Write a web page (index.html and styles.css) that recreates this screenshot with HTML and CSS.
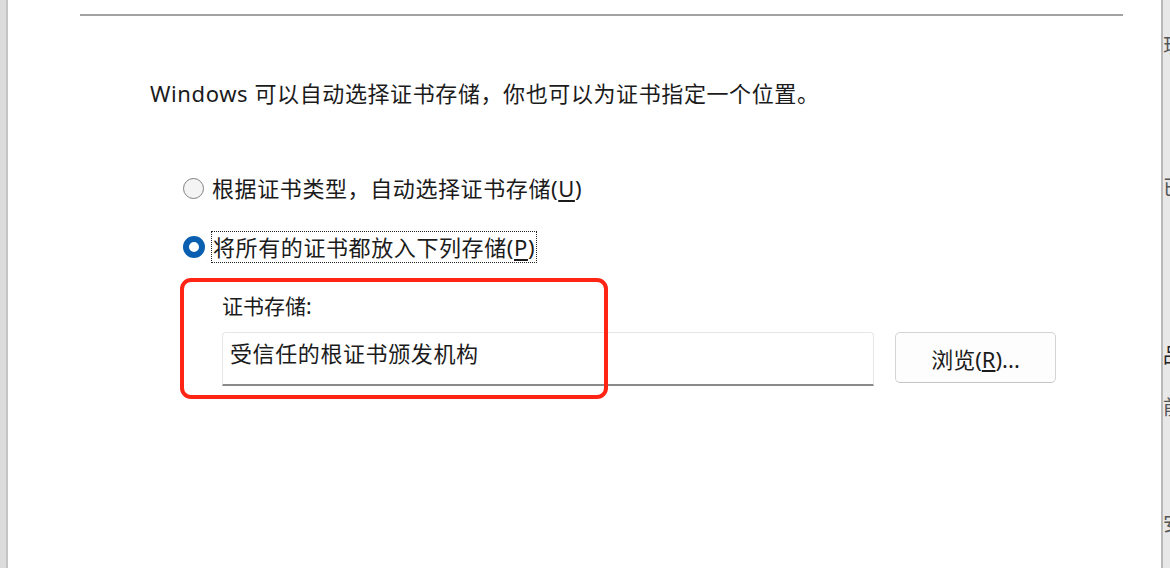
FILE: index.html
```html
<!DOCTYPE html>
<html lang="zh-CN">
<head>
<meta charset="utf-8">
<title>证书导入向导</title>
<link rel="stylesheet" href="styles.css">
</head>
<body>
<div class="screen">
  <div class="left-edge"></div>
  <div class="dialog">
    <div class="top-rule"></div>
    <p class="intro">Windows 可以自动选择证书存储，你也可以为证书指定一个位置。</p>
    <div class="options">
      <label class="radio-row">
        <span class="radio"></span>
        <span class="radio-text">根据证书类型，自动选择证书存储(<u>U</u>)</span>
      </label>
      <label class="radio-row">
        <span class="radio checked"></span>
        <span class="radio-text focus">将所有的证书都放入下列存储(<u>P</u>)</span>
      </label>
    </div>
    <div class="store">
      <div class="highlight"></div>
      <div class="store-label">证书存储:</div>
      <div class="store-row">
        <div class="field">受信任的根证书颁发机构</div>
        <button class="browse">浏览(<u>R</u>)...</button>
      </div>
    </div>
  </div>
  <div class="right-edge">
    <span class="frag f1">现</span>
    <span class="frag f2">已</span>
    <span class="frag f3">品</span>
    <span class="frag f4">前</span>
    <span class="frag f5">安</span>
  </div>
</div>
</body>
</html>
```

FILE: styles.css
```css
html, body {
  margin: 0;
  padding: 0;
  background: #ffffff;
}
body {
  font-family: "Noto Sans", "Noto Sans CJK SC", sans-serif;
  color: #1b1b1b;
}
.screen {
  display: flex;
  width: 1170px;
  height: 568px;
  overflow: hidden;
}
.left-edge {
  width: 6px;
  background: #dcdcdc;
  border-right: 2px solid #c4c4c4;
  flex: none;
}
.dialog {
  flex: 1;
  background: #ffffff;
  display: flex;
  flex-direction: column;
}
.top-rule {
  margin: 14px 0 0 72px;
  width: 1043px;
  height: 2px;
  background: #a3a3a3;
}
.intro {
  margin: 61px 0 0 142px;
  font-size: 22px;
  line-height: 32px;
  letter-spacing: 0.6px;
}
.options {
  margin: 63px 0 0 175px;
  display: flex;
  flex-direction: column;
  gap: 27px;
}
.radio-row {
  display: flex;
  align-items: center;
  gap: 6px;
  height: 32px;
}
.radio {
  width: 19px;
  height: 19px;
  border-radius: 50%;
  border: 1.5px solid #808080;
  background: #f4f4f4;
  flex: none;
  box-sizing: content-box;
}
.radio.checked {
  width: 10px;
  height: 10px;
  border: 6px solid #0a5fb0;
  background: #ffffff;
}
.radio-text {
  font-size: 22px;
  line-height: 30px;
  letter-spacing: 0.6px;
  padding: 0 1px;
  border: 1px dotted transparent;
}
.radio-text.focus {
  border-color: #222;
}
.radio-text u {
  text-underline-offset: 3px;
}
.store {
  position: relative;
  margin: 29px 0 0 214px;
}
.highlight {
  position: absolute;
  left: -42px;
  top: -14px;
  width: 420px;
  height: 113px;
  border: 4px solid #ff2414;
  border-radius: 11px;
  pointer-events: none;
}
.store-label {
  font-size: 21px;
  line-height: 28px;
}
.store-row {
  display: flex;
  align-items: flex-start;
  gap: 21px;
  margin-top: 12px;
}
.field {
  width: 643px;
  height: 51px;
  padding-left: 7px;
  border: 1px solid #e6e6e6;
  border-bottom: 2px solid #8a8a8a;
  border-radius: 4px 4px 0 0;
  font-size: 22px;
  letter-spacing: 0.6px;
  line-height: 40px;
  background: #ffffff;
}
.browse {
  width: 161px;
  height: 51px;
  border: 1px solid #d4d4d4;
  border-bottom-color: #c4c4c4;
  border-radius: 5px;
  background: #fdfdfd;
  font-family: "Noto Sans", "Noto Sans CJK SC", sans-serif;
  font-size: 22px;
  color: #1b1b1b;
  padding: 0;
}
.right-edge {
  width: 7px;
  flex: none;
  background: #e8e8e8;
  border-left: 2px solid #b9b9b9;
  position: relative;
  overflow: hidden;
}
.frag {
  position: absolute;
  left: 0;
  font-size: 20px;
  color: #555;
  font-family: "Noto Sans CJK SC", sans-serif;
}
.f1 { top: 30px; }
.f2 { top: 172px; }
.f3 { top: 340px; color: #222; }
.f4 { top: 392px; }
.f5 { top: 508px; }
```
